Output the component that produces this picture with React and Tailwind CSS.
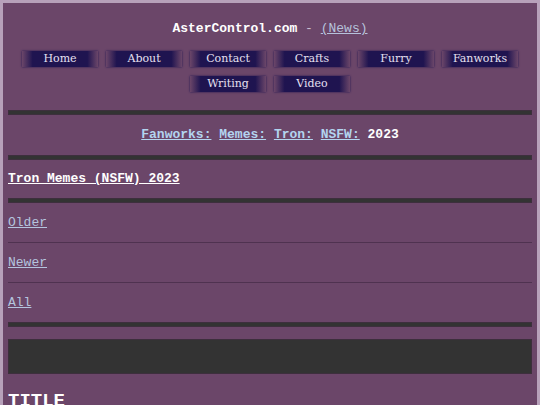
export default function App() {
  const nav1 = ['Home', 'About', 'Contact', 'Crafts', 'Furry', 'Fanworks'];
  const nav2 = ['Writing', 'Video'];
  const crumbs = ['Fanworks:', 'Memes:', 'Tron:', 'NSFW:'];
  const pager = ['Older', 'Newer', 'All'];

  const NavButton = ({ label }) => (
    <a
      href="#"
      className="w-[76px] h-[16px] flex items-center justify-center text-[11px] text-[#e6e0f0] bg-[linear-gradient(to_right,transparent,#1f1450_14%,#1f1450_86%,transparent)] shadow-[0_0_2px_#1f1450]"
      style={{ fontFamily: '"DejaVu Serif", serif' }}
    >
      {label}
    </a>
  );

  const Bar = () => <div className="h-[5px] bg-[#333] border border-[#3d2f3d]" />;

  return (
    <div
      className="min-h-screen bg-[#b7a1ba] p-[3px]"
      style={{ fontFamily: '"Liberation Mono", "Courier New", monospace' }}
    >
      <div className="bg-[#6b4669] px-[5px] pb-8 text-[13px] text-white">
        <div className="pt-[18px] text-center leading-[16px]">
          <b>AsterControl.com</b>
          <span className="text-[#c8bcd0]"> - </span>
          <a href="#" className="underline text-[#b6c2dc]">(News)</a>
        </div>

        <div className="mt-[14px] flex flex-col items-center gap-[9px]">
          <div className="flex gap-[8px]">
            {nav1.map((n) => (
              <NavButton key={n} label={n} />
            ))}
          </div>
          <div className="flex gap-[8px]">
            {nav2.map((n) => (
              <NavButton key={n} label={n} />
            ))}
          </div>
        </div>

        <div className="mt-[18px]">
          <Bar />
        </div>

        <div className="py-[12px] text-center font-bold leading-[16px]">
          {crumbs.map((c) => (
            <span key={c}>
              <a href="#" className="underline text-[#b3d4ef]">{c}</a>{' '}
            </span>
          ))}
          <span>2023</span>
        </div>

        <Bar />

        <div className="py-[11px] font-bold leading-[16px]">
          <a href="#" className="underline">Tron Memes (NSFW) 2023</a>
        </div>

        <Bar />

        <div>
          {pager.map((p, i) => (
            <div
              key={p}
              className={`py-[12px] leading-[15px] ${i < pager.length - 1 ? 'border-b border-[#4f3250]' : ''}`}
            >
              <a href="#" className="underline text-[#b4c4de]">{p}</a>
            </div>
          ))}
        </div>

        <Bar />

        <div className="mt-[12px] h-[35px] bg-[#333] border border-[#3d2f3d]" />

        <h2 className="mt-[16px] text-[19px] font-bold leading-[22px]">TITLE</h2>
      </div>
    </div>
  );
}
